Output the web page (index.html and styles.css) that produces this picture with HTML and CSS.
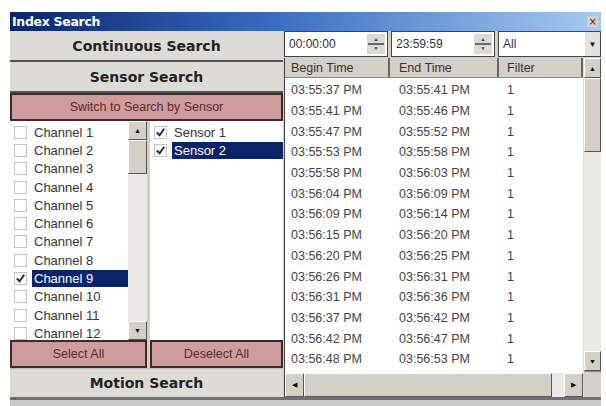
FILE: index.html
```html
<!DOCTYPE html>
<html lang="en">
<head>
    <meta charset="UTF-8">
    <title>Index Search</title>
    <link rel="stylesheet" href="styles.css">
</head>
<body>

    <div class="ventana">
        <!-- Barra de titulo -->
        <div class="titulo">
            <span>Index Search</span>
            <span class="cerrar">&#215;</span>
        </div>

        <div class="cuerpo">
            <!-- Columna izquierda -->
            <div class="izquierda">
                <div class="boton-grande">Continuous Search</div>
                <div class="boton-grande">Sensor Search</div>
                <div class="boton-rosa cambiar">Switch to Search by Sensor</div>

                <div class="listas">
                    <div class="lista-canales">
                        <div class="items">
                            <div class="item"><span class="check"></span>Channel 1</div>
                            <div class="item"><span class="check"></span>Channel 2</div>
                            <div class="item"><span class="check"></span>Channel 3</div>
                            <div class="item"><span class="check"></span>Channel 4</div>
                            <div class="item"><span class="check"></span>Channel 5</div>
                            <div class="item"><span class="check"></span>Channel 6</div>
                            <div class="item"><span class="check"></span>Channel 7</div>
                            <div class="item"><span class="check"></span>Channel 8</div>
                            <div class="item"><span class="check"><svg viewBox="0 0 12 12"><path d="M2 6 L5 9 L10 2" /></svg></span><span class="sel">Channel 9</span></div>
                            <div class="item"><span class="check"></span>Channel 10</div>
                            <div class="item"><span class="check"></span>Channel 11</div>
                            <div class="item"><span class="check"></span>Channel 12</div>
                        </div>
                        <div class="scroll-v">
                            <div class="flecha">&#9650;</div>
                            <div class="pulgar corto"></div>
                            <div class="pista"></div>
                            <div class="flecha">&#9660;</div>
                        </div>
                    </div>
                    <div class="lista-sensores">
                        <div class="item"><span class="check"><svg viewBox="0 0 12 12"><path d="M2 6 L5 9 L10 2" /></svg></span>Sensor 1</div>
                        <div class="item"><span class="check"><svg viewBox="0 0 12 12"><path d="M2 6 L5 9 L10 2" /></svg></span><span class="sel">Sensor 2</span></div>
                    </div>
                </div>

                <div class="fila-botones">
                    <div class="boton-rosa seleccionar">Select All</div>
                    <div class="boton-rosa deseleccionar">Deselect All</div>
                </div>

                <div class="boton-grande movimiento">Motion Search</div>
            </div>

            <!-- Columna derecha -->
            <div class="derecha">
                <div class="filtros">
                    <div class="campo hora">00:00:00<span class="spin"><i>&#9650;</i><b></b><i>&#9660;</i></span></div>
                    <div class="campo hora">23:59:59<span class="spin"><i>&#9650;</i><b></b><i>&#9660;</i></span></div>
                    <div class="campo combo">All<span class="baja">&#9660;</span></div>
                </div>

                <div class="tabla">
                    <div class="tabla-cuerpo">
                        <div class="cabecera">
                            <div class="col c1">Begin Time</div>
                            <div class="col c2">End Time</div>
                            <div class="col c3">Filter</div>
                        </div>
                        <div class="filas" id="filas"></div>
                        <div class="scroll-h">
                            <div class="flecha">&#9664;</div>
                            <div class="pulgar largo"></div>
                            <div class="pista"></div>
                            <div class="flecha">&#9654;</div>
                        </div>
                    </div>
                    <div class="scroll-v tabla-scroll">
                        <div class="flecha">&#9650;</div>
                        <div class="pulgar medio"></div>
                        <div class="pista"></div>
                        <div class="flecha">&#9660;</div>
                        <div class="esquina"></div>
                    </div>
                </div>
            </div>
        </div>
    </div>
    <div class="pie"></div>

    <script>
        // Registros del indice
        const registros = [
            ["03:55:37 PM", "03:55:41 PM"],
            ["03:55:41 PM", "03:55:46 PM"],
            ["03:55:47 PM", "03:55:52 PM"],
            ["03:55:53 PM", "03:55:58 PM"],
            ["03:55:58 PM", "03:56:03 PM"],
            ["03:56:04 PM", "03:56:09 PM"],
            ["03:56:09 PM", "03:56:14 PM"],
            ["03:56:15 PM", "03:56:20 PM"],
            ["03:56:20 PM", "03:56:25 PM"],
            ["03:56:26 PM", "03:56:31 PM"],
            ["03:56:31 PM", "03:56:36 PM"],
            ["03:56:37 PM", "03:56:42 PM"],
            ["03:56:42 PM", "03:56:47 PM"],
            ["03:56:48 PM", "03:56:53 PM"],
            ["03:56:53 PM", "03:56:58 PM"]
        ];

        const contenedor = document.getElementById("filas");
        registros.forEach(function (r) {
            const fila = document.createElement("div");
            fila.className = "fila";
            fila.innerHTML = '<div class="col c1">' + r[0] + '</div><div class="col c2">' + r[1] + '</div><div class="col c3">1</div>';
            contenedor.appendChild(fila);
        });
    </script>

</body>
</html>
```

FILE: styles.css
```css
body {
    margin: 0;
    background-color: #fff;
    font-family: 'Liberation Sans', Arial, sans-serif;
    font-size: 12.5px;
    color: #333;
}

.ventana {
    margin: 12px 0 0 10px;
    width: 591px;
    height: 385px;
    background-color: #d4d0c8;
    border-bottom: 3px solid #6f6f6f;
    display: flex;
    flex-direction: column;
}

.pie {
    margin-left: 10px;
    width: 591px;
    height: 6px;
    background-color: #c9c9c9;
}

.titulo {
    height: 19px;
    display: flex;
    align-items: center;
    justify-content: space-between;
    padding: 0 3px 0 2px;
    background: linear-gradient(to right, #0a246a 0%, #3a6ec0 45%, #a6caf0 100%);
    color: #fff;
    font-family: 'DejaVu Sans', sans-serif;
    font-weight: bold;
    font-size: 12.5px;
    letter-spacing: -0.3px;
}

.cerrar {
    width: 11px;
    height: 11px;
    background-color: #d4d0c8;
    color: #333;
    font-size: 10px;
    line-height: 11px;
    text-align: center;
    font-weight: normal;
}

.cuerpo {
    flex: 1;
    display: flex;
    min-height: 0;
}

/* Columna izquierda */
.izquierda {
    width: 273px;
    display: flex;
    flex-direction: column;
}

.boton-grande {
    height: 29px;
    border-bottom: 2px solid #555;
    background-color: #dddbd6;
    display: flex;
    align-items: center;
    justify-content: center;
    font-family: 'DejaVu Sans', sans-serif;
    font-weight: bold;
    font-size: 14px;
    color: #222;
}

.boton-grande.movimiento {
    height: 28px;
    border-bottom: none;
    border-top: 1px solid #bbb;
}

.boton-rosa {
    background-color: #cf9c9e;
    border: 2px solid #3a2a2a;
    color: #5a2b2b;
    display: flex;
    align-items: center;
    justify-content: center;
    font-size: 12.5px;
    box-sizing: border-box;
}

.cambiar {
    height: 28px;
}

.listas {
    height: 219px;
    display: flex;
    gap: 3px;
    background-color: #d4d0c8;
}

.lista-canales {
    width: 137px;
    display: flex;
    background-color: #fff;
}

.items {
    flex: 1;
    overflow: hidden;
    padding-top: 2px;
}

.item {
    height: 18.3px;
    display: flex;
    align-items: center;
    padding-left: 4px;
    font-size: 13px;
    color: #333;
    white-space: nowrap;
}

.check {
    width: 11px;
    height: 11px;
    border: 1px solid #c4c4c4;
    background-color: #fff;
    margin-right: 7px;
    flex: none;
    display: flex;
}

.check svg {
    width: 11px;
    height: 11px;
    fill: none;
    stroke: #222;
    stroke-width: 2;
}

.sel {
    background-color: #0a246a;
    color: #fff;
    padding: 1px 3px 1px 2px;
    margin-left: -2px;
    flex: 1;
}

.lista-sensores {
    flex: 1;
    background-color: #fff;
    padding-top: 2px;
}

/* Barras de desplazamiento */
.scroll-v {
    width: 19px;
    display: flex;
    flex-direction: column;
    background-color: #ebe9e5;
}

.scroll-h {
    height: 24px;
    display: flex;
    background-color: #ebe9e5;
}

.flecha {
    flex: none;
    width: 17px;
    height: 17px;
    background-color: #d4d0c8;
    border: 1px solid;
    border-color: #fff #555 #555 #fff;
    font-size: 7px;
    color: #111;
    display: flex;
    align-items: center;
    justify-content: center;
}

.scroll-h .flecha {
    height: 22px;
}

.pulgar {
    background-color: #d4d0c8;
    border: 1px solid;
    border-color: #fff #555 #555 #fff;
    box-sizing: border-box;
}

.pulgar.corto {
    height: 34px;
}

.pulgar.medio {
    height: 74px;
}

.pulgar.largo {
    width: 248px;
}

.pista {
    flex: 1;
}

.fila-botones {
    height: 28px;
    display: flex;
    gap: 3px;
}

.seleccionar {
    width: 137px;
}

.deseleccionar {
    flex: 1;
}

/* Columna derecha */
.derecha {
    flex: 1;
    display: flex;
    flex-direction: column;
    padding-left: 1px;
}

.filtros {
    height: 27px;
    display: flex;
    gap: 3px;
}

.campo {
    background-color: #fff;
    border: 1px solid #444;
    box-sizing: border-box;
    height: 26px;
    display: flex;
    align-items: center;
    padding-left: 4px;
    font-size: 12px;
    color: #333;
    position: relative;
}

.hora {
    width: 104px;
}

.combo {
    flex: 1;
}

.spin {
    position: absolute;
    right: 2px;
    top: 2px;
    width: 18px;
    height: 20px;
    background-color: #dcdad5;
    display: flex;
    flex-direction: column;
    align-items: center;
    justify-content: center;
}

.spin i {
    font-style: normal;
    font-size: 5px;
    line-height: 7px;
    color: #333;
}

.spin b {
    width: 16px;
    height: 2px;
    background-color: #666;
}

.baja {
    position: absolute;
    right: 0;
    top: 0;
    bottom: 0;
    width: 15px;
    background-color: #e4e2de;
    font-size: 8px;
    display: flex;
    align-items: center;
    justify-content: center;
    color: #111;
}

.tabla {
    flex: 1;
    display: flex;
    background-color: #fff;
    border-left: 1px solid #444;
    min-height: 0;
}

.tabla-cuerpo {
    flex: 1;
    display: flex;
    flex-direction: column;
    min-width: 0;
}

.cabecera {
    height: 19px;
    display: flex;
    background-color: #d4d0c8;
    border-bottom: 1px solid #888;
}

.cabecera .col {
    border-right: 2px solid #666;
    display: flex;
    align-items: center;
}

.col {
    padding-left: 6px;
    box-sizing: border-box;
    flex: none;
    white-space: nowrap;
}

.c1 {
    width: 105px;
}

.c2 {
    width: 109px;
    padding-left: 9px;
}

.c3 {
    flex: 1;
    padding-left: 8px;
}

.filas {
    flex: 1;
    overflow: hidden;
    padding-top: 2px;
}

.fila {
    height: 20.7px;
    display: flex;
    align-items: center;
    font-size: 12.5px;
    color: #444;
}

.tabla-scroll {
    width: 17px;
    border-left: 1px solid #ddd;
}

.tabla-scroll .flecha {
    width: 15px;
    height: 18px;
}

.esquina {
    height: 25px;
    background-color: #d4d0c8;
    border-top: 1px solid #888;
}
```
